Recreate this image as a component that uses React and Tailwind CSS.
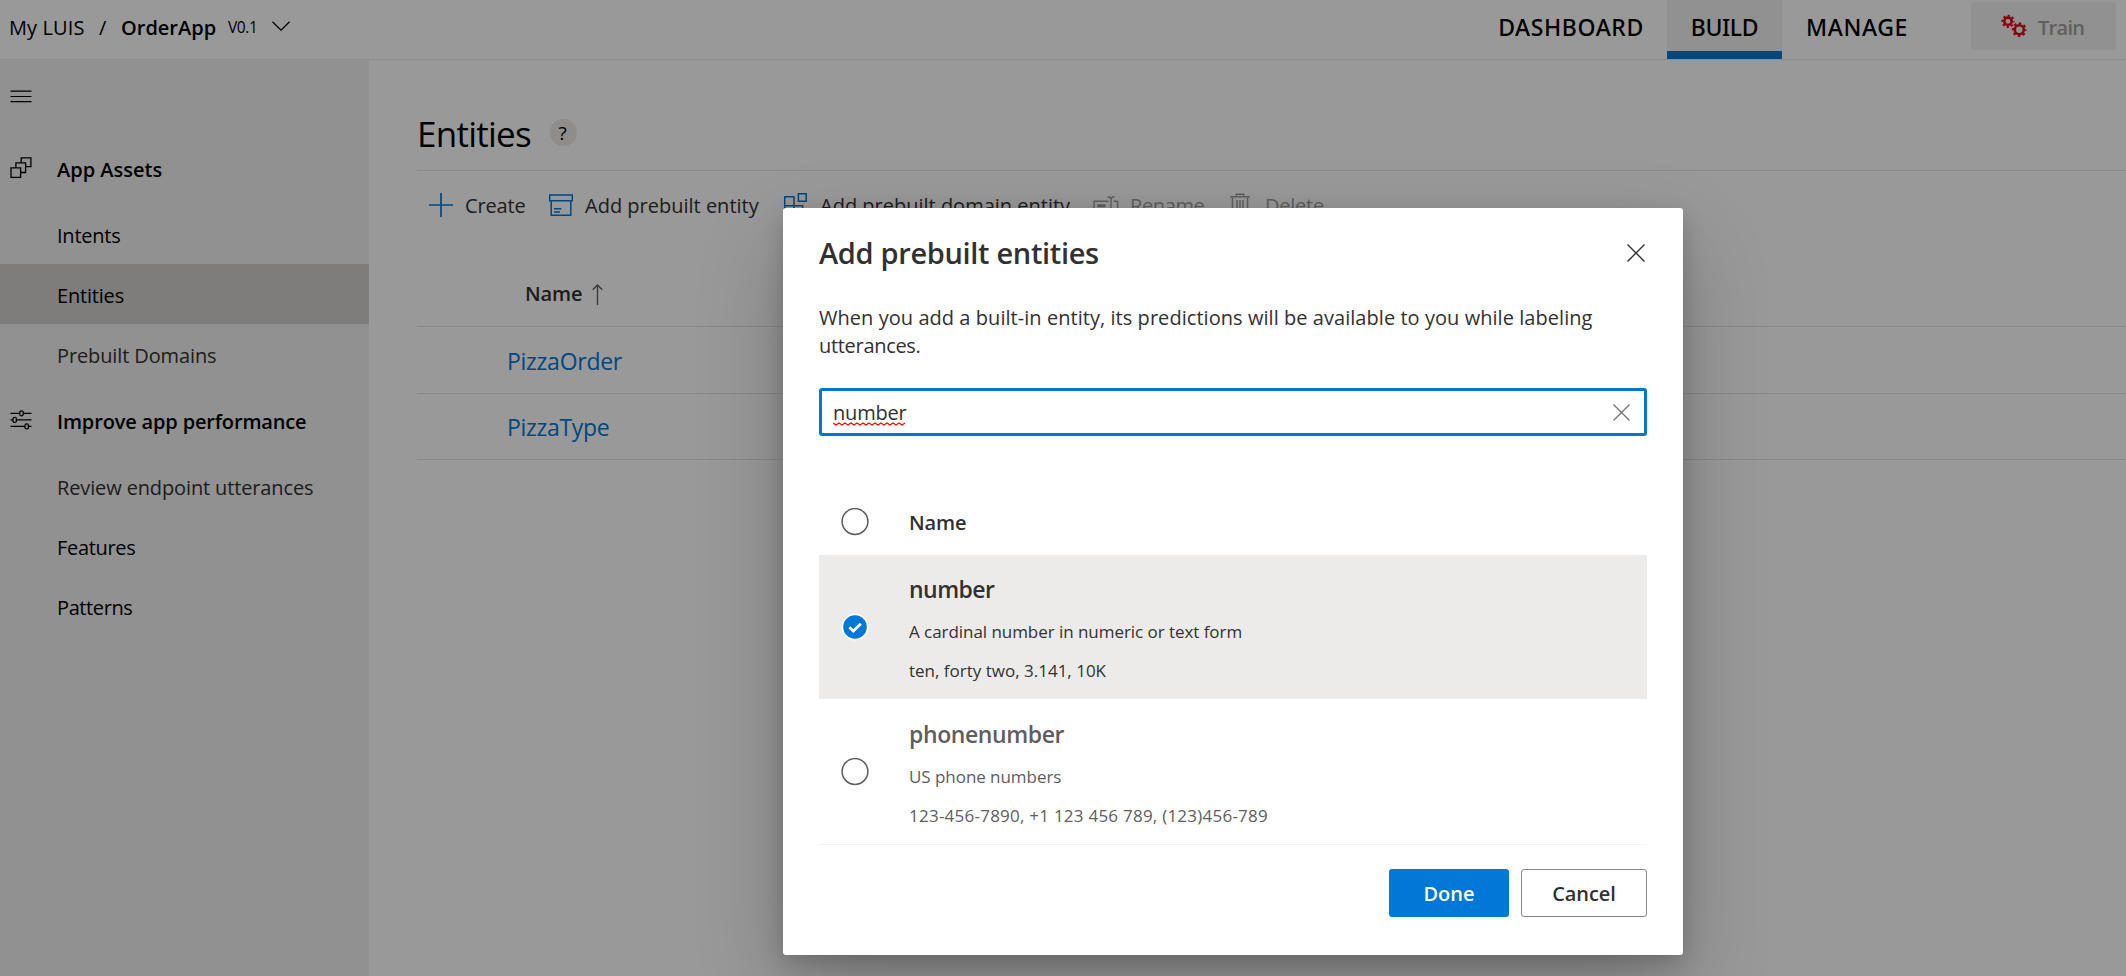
import React from "react";

function ChevronDown() {
  return (
    <svg width="18" height="10" viewBox="0 0 18 10" fill="none" stroke="#000" strokeWidth="1.2">
      <path d="M0.5 0.8 9 9.2 17.5 0.8" />
    </svg>
  );
}

function Gear({ cx, cy, r }) {
  const step = (2 * Math.PI * (r + 1.9)) / 8;
  return (
    <g>
      <circle cx={cx} cy={cy} r={r} strokeWidth="2.6" />
      <circle
        cx={cx}
        cy={cy}
        r={r + 1.9}
        strokeWidth="2"
        strokeDasharray={`${step * 0.5} ${step * 0.5}`}
        strokeDashoffset={step * 0.25}
      />
    </g>
  );
}

function Gears() {
  return (
    <svg width="28" height="26" viewBox="0 0 28 26" fill="none" stroke="#e00b1c">
      <Gear cx={8} cy={8.3} r={3.7} />
      <Gear cx={19.3} cy={16.7} r={4.5} />
    </svg>
  );
}

function AssetsIcon() {
  return (
    <svg width="22" height="22" viewBox="0 0 22 22" fill="none" stroke="#000" strokeWidth="1.3">
      <path d="M1 10.8H10.6V20.4H1ZM5.9 10.5V5.8H15.6V15.5H10.9M11.2 5.5V0.8H20.9V9.6H15.9" />
    </svg>
  );
}

function SlidersIcon() {
  return (
    <svg width="22" height="20" viewBox="0 0 22 20" fill="none" stroke="#000" strokeWidth="1.3">
      <path d="M0.5 3.3H9.8M13.2 3.3H21.5M0.5 9.9H3M6.4 9.9H21.5M0.5 16.4H15M18.4 16.4H21.5" />
      <rect x="9.8" y="0.8" width="3.4" height="5" rx="1.5" />
      <rect x="3" y="7.4" width="3.4" height="5" rx="1.5" />
      <rect x="15" y="13.9" width="3.4" height="5" rx="1.5" />
    </svg>
  );
}

function PlusIcon() {
  return (
    <svg width="24" height="24" viewBox="0 0 24 24" fill="none" stroke="#0078d4" strokeWidth="1.7">
      <path d="M12 0V24M0 12H24" />
    </svg>
  );
}

function PrebuiltIcon() {
  return (
    <svg width="24" height="24" viewBox="0 0 24 24" fill="none" stroke="#0078d4" strokeWidth="1.5">
      <path d="M0.7 2H23.3V7.8H0.7ZM2.2 7.8V22.3H21.8V7.8M5 15.8H12.3M5 19H11" />
    </svg>
  );
}

function DomainIcon() {
  return (
    <svg width="24" height="24" viewBox="0 0 24 24" fill="none" stroke="#0078d4" strokeWidth="1.5">
      <path d="M0.7 3.7H10V22.3H0.7ZM0.7 12.7H18.6V22.3H10M14.4 0.7H22.2V8.3H14.4Z" />
    </svg>
  );
}

function RenameIcon() {
  return (
    <svg width="26" height="24" viewBox="0 0 26 24" fill="none" stroke="#a19f9d" strokeWidth="1.4">
      <path d="M15.5 8.2H1V18.5H15.5M20.5 8.2H24.6V18.5H20.5M14.5 3.7C16.5 3.7 18 4.4 18 6V20C18 21.5 16.5 22.3 14.5 22.3M21.5 3.7C19.5 3.7 18 4.4 18 6M18 20C18 21.5 19.5 22.3 21.5 22.3" />
      <path d="M4.2 12.8H12.5" strokeWidth="3" />
    </svg>
  );
}

function TrashIcon() {
  return (
    <svg width="22" height="24" viewBox="0 0 22 24" fill="none" stroke="#a19f9d" strokeWidth="1.4">
      <path d="M0 3.7H20M6.3 3.7V1.2H13.7V3.7M2.4 3.7V22.5H17.6V3.7M7 7V19.5M10 7V19.5M13 7V19.5" />
    </svg>
  );
}

function CloseIcon({ size, color }) {
  return (
    <svg width={size} height={size} viewBox="0 0 18 18" fill="none" stroke={color} strokeWidth="1.4">
      <path d="M0.5 0.5 17.5 17.5M17.5 0.5 0.5 17.5" />
    </svg>
  );
}

function Radio({ checked }) {
  return (
    <svg width="28" height="28" viewBox="0 0 28 28" fill="none">
      {checked ? (
        <>
          <circle cx="14" cy="14" r="13.5" fill="#fff" />
          <circle cx="14" cy="14" r="11.8" fill="#0078d7" />
          <path d="M8.3 14.2 12.3 18 19.8 10.8" stroke="#fff" strokeWidth="2.8" />
        </>
      ) : (
        <circle cx="14" cy="13.5" r="12.9" stroke="#605e5c" strokeWidth="1.5" />
      )}
    </svg>
  );
}

function Header() {
  return (
    <header className="flex h-[60px] shrink-0 border-b border-[#edebe9] bg-white text-black">
      <div className="flex items-center pb-[3px] pl-[9px] text-[20px] whitespace-nowrap">
        <span className="w-[90px] tracking-[0.1px]">My LUIS</span>
        <span className="w-[22px]">/</span>
        <span className="w-[107px] font-semibold">OrderApp</span>
        <span className="w-[44px] text-[15.5px] tracking-[-0.4px]">V0.1</span>
        <span className="-mt-[5px]"><ChevronDown /></span>
      </div>
      <nav className="ml-auto flex font-['Noto_Sans'] text-[23px] font-medium">
        <span className="flex w-[192px] items-center justify-center pb-[4px] tracking-[0.6px]">DASHBOARD</span>
        <span className="flex w-[115px] items-center justify-center border-b-8 border-[#0078d4] bg-[#f2f2f2] pt-[4px] tracking-[-0.35px]">BUILD</span>
        <span className="flex w-[150px] items-center justify-center pb-[4px] tracking-[0.6px]">MANAGE</span>
      </nav>
      <button className="mt-[2px] mr-[10px] ml-[39px] flex h-[48px] w-[145px] items-center rounded-[3px] bg-[#f2f2f2] pl-[29px] text-[20px] font-semibold text-[#a19f9d]">
        <Gears />
        <span className="ml-[10px] pt-[3px] tracking-[-0.7px]">Train</span>
      </button>
    </header>
  );
}

function NavItem({ label, className = "" }) {
  return <div className={`flex h-[60px] items-center pt-[4px] pl-[57px] text-[20px] ${className}`}>{label}</div>;
}

function NavHeading({ icon, label, className = "" }) {
  return (
    <div className="flex h-[72px] items-center pl-[10px] text-[20px] font-semibold text-black">
      <span className="w-[47px]">{icon}</span>
      <span className={`pt-[4px] ${className}`}>{label}</span>
    </div>
  );
}

function Sidebar() {
  return (
    <aside className="w-[369px] shrink-0 bg-[#f2f2f2] text-black">
      <div className="flex h-[72px] items-center pt-px pl-[10px]">
        <svg width="22" height="13" viewBox="0 0 22 13" stroke="#000" strokeWidth="1.2">
          <path d="M0.5 1.2H21.5M0.5 6.5H21.5M0.5 11.7H21.5" />
        </svg>
      </div>
      <NavHeading icon={<AssetsIcon />} label="App Assets" />
      <NavItem label="Intents" className="tracking-[-0.23px]" />
      <NavItem label="Entities" className="bg-[#d2d0ce] tracking-[-0.19px]" />
      <NavItem label="Prebuilt Domains" className="tracking-[-0.12px] text-[#323130]" />
      <NavHeading icon={<SlidersIcon />} label="Improve app performance" className="tracking-[-0.16px]" />
      <NavItem label="Review endpoint utterances" className="tracking-[-0.13px] text-[#323130]" />
      <NavItem label="Features" className="tracking-[-0.31px]" />
      <NavItem label="Patterns" className="tracking-[-0.39px]" />
    </aside>
  );
}

function Command({ icon, label, iconWidth, className = "" }) {
  return (
    <div className={`flex shrink-0 items-center ${className}`}>
      <span className={`shrink-0 ${iconWidth}`}>{icon}</span>
      <span className="pt-[2px]">{label}</span>
    </div>
  );
}

function Content() {
  return (
    <main className="min-w-0 grow bg-white pt-[59px] pl-[48px]">
      <div className="flex h-[27px] items-center text-black">
        <h1 className="w-[133px] pt-[2px] text-[35px] leading-none tracking-[-0.75px]">Entities</h1>
        <span className="flex h-[27px] w-[27px] items-center justify-center rounded-full bg-[#edebe9] pt-[2px] pr-[2px] text-[19px] leading-none">?</span>
      </div>
      <div className="mt-[24px] flex h-[68px] items-center border-t border-[#e6e4e2] pl-[12px] text-[20px] whitespace-nowrap text-[#323130]">
        <Command icon={<PlusIcon />} label="Create" iconWidth="w-[36px]" className="w-[120px] tracking-[-0.16px]" />
        <Command icon={<PrebuiltIcon />} label="Add prebuilt entity" iconWidth="w-[36px]" className="w-[235px]" />
        <Command icon={<DomainIcon />} label="Add prebuilt domain entity" iconWidth="w-[36px]" className="w-[309px]" />
        <Command icon={<RenameIcon />} label="Rename" iconWidth="w-[37px]" className="w-[137px] tracking-[-0.37px] text-[#a19f9d]" />
        <Command icon={<TrashIcon />} label="Delete" iconWidth="w-[35px]" className="tracking-[-0.23px] text-[#a19f9d]" />
      </div>
      <div className="mt-[22px] flex h-[67px] items-center border-b border-[#e6e4e2] pl-[108px] text-[20px] font-semibold text-[#323130]">
        <span className="w-[67px] pt-[2px] tracking-[-0.09px]">Name</span>
        <svg width="11" height="21" viewBox="0 0 11 21" fill="none" stroke="#605e5c" strokeWidth="1.3" className="mt-[2px]">
          <path d="M5.5 21V1M0.7 5.8 5.5 1 10.3 5.8" />
        </svg>
      </div>
      <div className="flex h-[67px] items-center border-b border-[#e6e4e2] pt-[2px] pl-[90px] text-[23px] tracking-[-0.27px] text-[#0078d4]">PizzaOrder</div>
      <div className="flex h-[66px] items-center border-b border-[#e6e4e2] pt-[2px] pl-[90px] text-[23px] tracking-[-0.3px] text-[#0078d4]">PizzaType</div>
    </main>
  );
}

function EntityRow({ name, description, examples, checked, className, nameClass, descriptionClass = "", examplesClass = "" }) {
  return (
    <div className={`flex ${className}`}>
      <div className="flex w-[90px] items-center pl-[22px]">
        <Radio checked={checked} />
      </div>
      <div className="pt-[16px] text-[17px] whitespace-nowrap">
        <div className={`text-[23px] leading-[37px] font-semibold ${nameClass}`}>{name}</div>
        <div className={`mt-[4px] leading-[39px] ${descriptionClass}`}>{description}</div>
        <div className={`leading-[39px] ${examplesClass}`}>{examples}</div>
      </div>
    </div>
  );
}

function Dialog() {
  return (
    <div className="absolute top-[208px] left-[783px] h-[747px] w-[900px] rounded-[3px] bg-white px-[36px] pt-[21px] text-[#323130] shadow-[0_38px_86px_rgba(0,0,0,0.22),0_7px_22px_rgba(0,0,0,0.18)]">
      <div className="flex h-[48px] items-center justify-between">
        <h2 className="text-[29px] font-semibold tracking-[-0.33px]">Add prebuilt entities</h2>
        <span className="mr-[2px]"><CloseIcon size={18} color="#323130" /></span>
      </div>
      <p className="mt-[27px] text-[20px] leading-[28px] tracking-[0.05px]">
        When you add a built-in entity, its predictions will be available to you while labeling
        <br />
        <span className="tracking-[-0.31px]">utterances.</span>
      </p>
      <div className="mt-[28px] flex h-[48px] items-center justify-between rounded-[3px] border-3 border-[#0078d7] pr-[14px] pl-[11px] text-[20px]">
        <span className="relative pt-[2px] tracking-[-0.2px]">
          number
          <svg width="73" height="4" viewBox="0 0 73 4" fill="none" stroke="#f00" strokeWidth="1.3" className="absolute top-[26px] left-0">
            <path d="M0 1L3 3L6 1L9 3L12 1L15 3L18 1L21 3L24 1L27 3L30 1L33 3L36 1L39 3L42 1L45 3L48 1L51 3L54 1L57 3L60 1L63 3L66 1L69 3L72 1" />
          </svg>
        </span>
        <CloseIcon size={17} color="#797775" />
      </div>
      <div className="mt-[53px] flex h-[66px] items-center text-[20px] font-semibold">
        <div className="w-[90px] pl-[22px]"><Radio /></div>
        <span className="pt-[2px] tracking-[-0.09px]">Name</span>
      </div>
      <EntityRow
        checked
        name="number"
        description="A cardinal number in numeric or text form"
        examples="ten, forty two, 3.141, 10K"
        className="h-[144px] bg-[#edebe9]"
        nameClass="tracking-[-0.53px]"
        descriptionClass="tracking-[-0.05px]"
      />
      <EntityRow
        name="phonenumber"
        description="US phone numbers"
        examples="123-456-7890, +1 123 456 789, (123)456-789"
        className="h-[146px] border-b border-[#f3f2f1] pt-px text-[#605e5c]"
        nameClass="tracking-[-0.4px]"
        descriptionClass="tracking-[-0.05px]"
        examplesClass="tracking-[0.24px]"
      />
      <div className="mt-[24px] flex h-[48px] justify-end gap-[12px] text-[20px] font-semibold">
        <button className="w-[120px] rounded-[3px] bg-[#0078d7] pt-[2px] text-white">Done</button>
        <button className="w-[126px] rounded-[3px] border border-[#8a8886] bg-white pt-[2px] tracking-[-0.09px]">Cancel</button>
      </div>
    </div>
  );
}

export default function App() {
  return (
    <div className="relative flex h-screen w-full flex-col overflow-hidden bg-white font-['Open_Sans','Noto_Sans',sans-serif]">
      <Header />
      <div className="flex min-h-0 grow">
        <Sidebar />
        <Content />
      </div>
      <div className="absolute inset-0 bg-black/40">
        <Dialog />
      </div>
    </div>
  );
}
